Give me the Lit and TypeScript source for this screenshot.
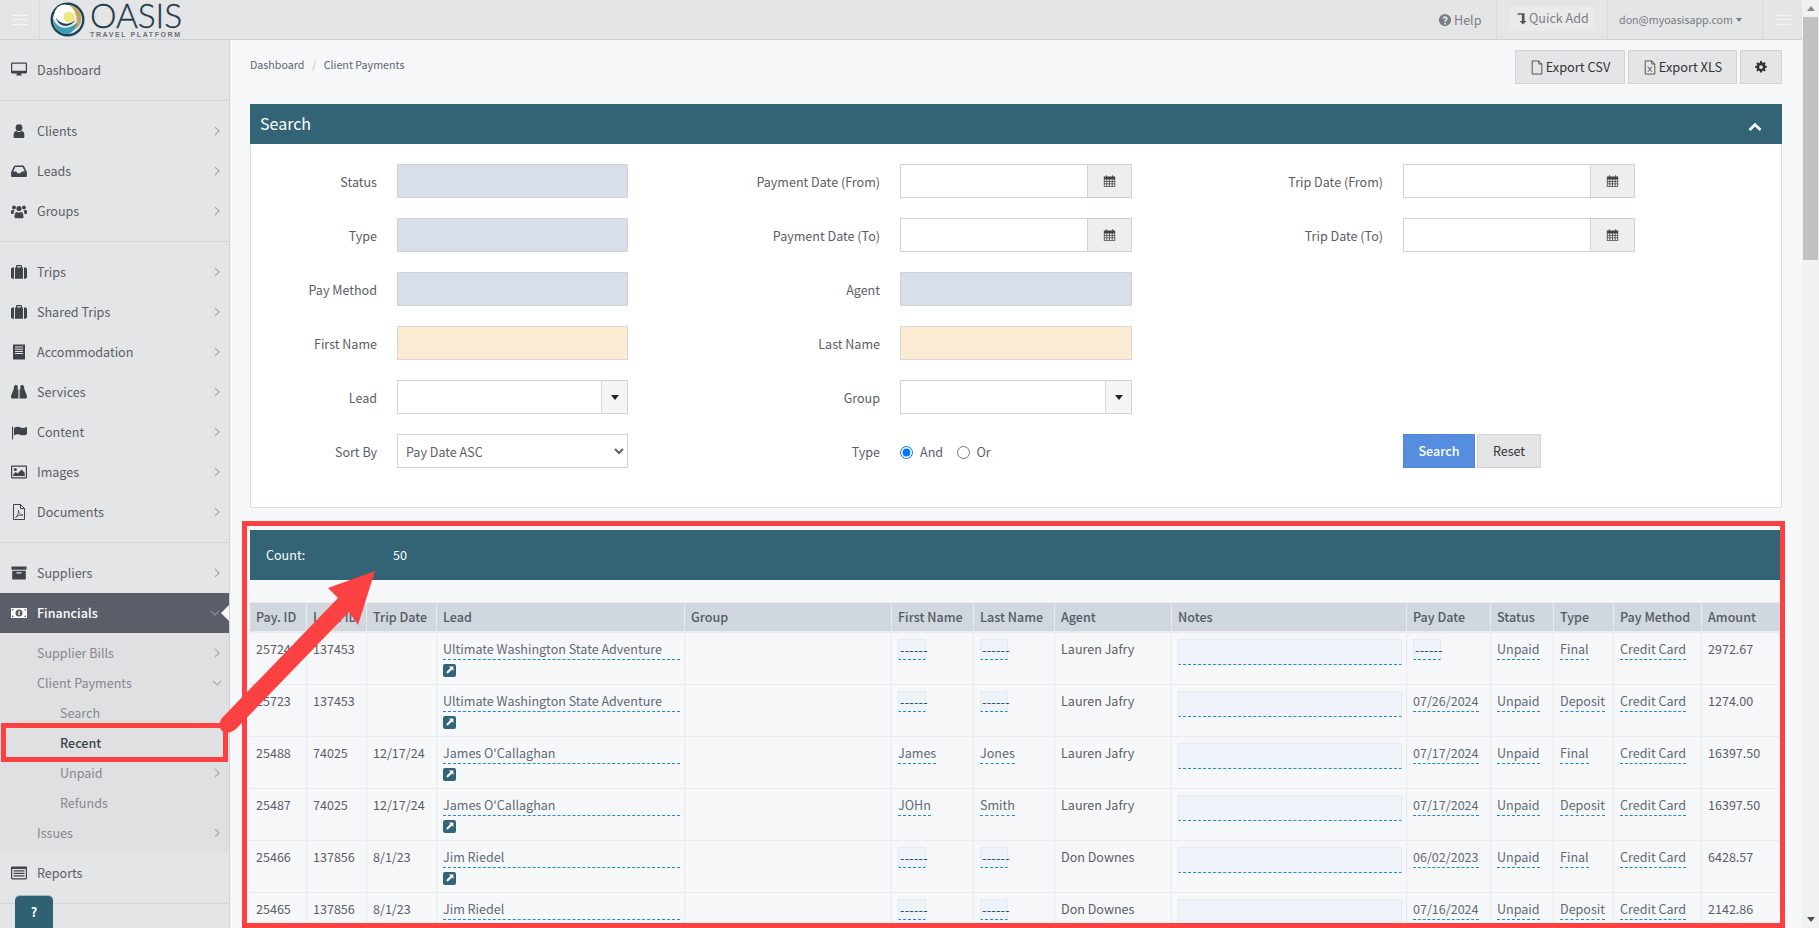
import { LitElement, html, css, svg } from "lit";
import { customElement } from "lit/decorators.js";

const P: Record<string, any> = {
  desktop: svg`<path fill-rule="evenodd" d="M0 1.7C0 1 .5.6 1.1.6h13.8c.6 0 1.1.4 1.1 1.1v8.6c0 .7-.5 1.1-1.1 1.1H10c0 .9.5 1.2.8 1.7v.5H5.200v-.5c.3-.5.8-.8.8-1.700H1.100C.5 11.400 0 11 0 10.300zM1.200 1.800v7h13.600v-7z"/>`,
  user: svg`<circle cx="8" cy="4.700" r="3.400"/><path d="M2.500 13.200c0-3.500 1.200-5.200 3-5.200 1.600 1.200 3.400 1.200 5 0 1.800 0 3 1.700 3 5.200 0 1.200-.8 1.900-1.800 1.900H4.300C3.300 15.100 2.500 14.400 2.500 13.200z"/>`,
  inbox: svg`<path fill-rule="evenodd" d="M4 2.500h8c.5 0 .8.200 1 .6l2.600 5.400c.2.300.3.600.3 1v3.400c0 .7-.5 1.100-1.100 1.100H1.200c-.6 0-1.100-.4-1.100-1.100V9.500c0-.4.100-.7.300-1L3 3.100c.2-.4.500-.6 1-.6zM4.300 4 2.200 8.500h3.200l1 1.800h3.200l1-1.800h3.200L11.700 4z"/>`,
  users: svg`<circle cx="8" cy="5.500" r="2.600"/><circle cx="3" cy="4.500" r="1.900"/><circle cx="13" cy="4.500" r="1.900"/><path d="M3.500 14c0-3 .8-5 2.300-5 1.300.8 3.100.8 4.400 0 1.500 0 2.300 2 2.300 5 0 .8-.6 1.300-1.300 1.300H4.800c-.7 0-1.300-.5-1.300-1.300z"/><path d="M0 10c0-2 .5-3.200 1.500-3.200.7.500 1.500.6 2.200.5-.6.700-1 1.400-1.200 3.700H1C.4 11 0 10.700 0 10zM16 10c0-2-.5-3.200-1.500-3.200-.7.500-1.500.6-2.200.5.600.700 1 1.400 1.200 3.700H15c.6 0 1-.3 1-1z"/>`,
  briefcase: svg`<path fill-rule="evenodd" d="M5 3.500V2.200C5 1.500 5.500 1 6.200 1h3.600c.7 0 1.200.5 1.200 1.200v1.300h1v11.200H4V3.500zM6.100 3.500h3.800V2.200H6.100z"/><path d="M1.700 3.500H3v11.200H1.700C.8 14.700 0 14 0 13V5.200c0-1 .8-1.700 1.700-1.700zM14.300 3.500H13v11.200h1.300c.9 0 1.700-.7 1.700-1.700V5.200c0-1-.8-1.700-1.700-1.700z"/>`,
  building: svg`<path fill-rule="evenodd" d="M2 .5h12v15H2zM4 2.500v1h8v-1zM4 4.700v1h8v-1zM4 6.900v1h8v-1zM4 9.100v1h8v-1z"/>`,
  binoculars: svg`<path d="M4.700 1c1.200 0 2 .5 2 1.500v3h.7v9H1C.4 14.500 0 14 0 13.300 0 10 2 8 2.700 5c0-2.500.8-4 2-4zM11.300 1c-1.200 0-2 .5-2 1.500v3h-.7v9H15c.6 0 1-.5 1-1.200C16 10 14 8 13.300 5c0-2.500-.8-4-2-4z"/>`,
  flag: svg`<path d="M1 2.500h1.100v13H1z"/><path d="M3 4c2.500-1.500 4.500-1.500 6.500-.5 2 .8 4 .6 6.500-.7v7.400c-2.500 1.300-4.500 1.500-6.500.7-2-1-4-1-6.500.5z"/>`,
  image: svg`<path fill-rule="evenodd" d="M0 2.800c0-.7.500-1.200 1.200-1.200h13.600c.7 0 1.200.5 1.200 1.200v10.400c0 .7-.5 1.200-1.200 1.200H1.200C.5 14.400 0 13.900 0 13.200zM1.200 2.800v10.400h13.600V2.800z"/><circle cx="4.300" cy="5.500" r="1.500"/><path d="M2.300 12v-1.700l2.500-2.400 1.800 1.500 3.900-4 3.200 3.300V12z"/>`,
  pdf: svg`<path fill="none" stroke="currentColor" d="M2.500.5h7l4 4v11h-11zM9.500.5v4h4"/><path fill="none" stroke="currentColor" stroke-width=".8" d="M4.500 13.500c2-1 3.500-5 3-7.500-.5 2.500 2 5 4.500 5-2.500-.2-5.500.6-7.500 2.500z"/>`,
  archive: svg`<path fill-rule="evenodd" d="M.5 1.500h15v3.300H.5zM1.200 5.800h13.600v8.700H1.200zM5.500 7.300v1.300h5V7.300z"/>`,
  money: svg`<path fill="#fff" d="M0 3h16v10H0z"/><circle cx="8" cy="8" r="3.500" fill="#5a5e69"/><path fill="#fff" d="M7.500 6h1.200v4H7.500z"/><path fill="#5a5e69" d="M1 4h2L1 6zM15 4h-2l2 2zM1 12h2l-2-2zM15 12h-2l2-2z"/>`,
  list: svg`<path fill-rule="evenodd" d="M0 2.800c0-.7.500-1.200 1.200-1.200h13.600c.7 0 1.200.5 1.200 1.200v10.400c0 .7-.5 1.200-1.200 1.200H1.200C.5 14.400 0 13.900 0 13.200zM1.200 4v9.200h13.600V4zM2.500 5.200h11v1.300h-11zM2.500 7.800h11v1.300h-11zM2.500 10.300h11v1.300h-11z"/>`,
  calendar: svg`<path fill-rule="evenodd" d="M1 2.500h2.500V1h1.200v1.500h6.600V1h1.200v1.500H15v12.500H1zM2 6v2h2.200V6zM5.200 6v2h2.300V6zM8.500 6v2h2.300V6zM11.800 6v2H14V6zM2 9v2h2.200V9zM5.200 9v2h2.300V9zM8.500 9v2h2.300V9zM11.800 9v2H14V9zM2 12v2h2.200v-2zM5.200 12v2h2.300v-2zM8.500 12v2h2.300v-2zM11.800 12v2H14v-2z"/>`,
  file: svg`<path fill="none" stroke="currentColor" d="M2.500.5h7.500l3.500 3.500v11.500h-11zM10 .5V4h3.500"/>`,
  xls: svg`<path fill="none" stroke="currentColor" d="M2.500.5h7.500l3.500 3.500v11.500h-11zM10 .5V4h3.500"/><path fill="none" stroke="currentColor" d="M5.500 7l4.500 6M10 7l-4.500 6"/>`,
  gear: svg`<path fill-rule="evenodd" d="M6.800 0h2.400l.4 2.100 1.200.5 1.800-1.200 1.700 1.700-1.200 1.800.5 1.200 2.100.4v2.400l-2.100.4-.5 1.200 1.200 1.800-1.700 1.700-1.800-1.200-1.200.5-.4 2.100H6.800l-.4-2.100-1.200-.5-1.800 1.200-1.700-1.700 1.200-1.800-.5-1.200L.3 9.200V6.800l2.100-.4.5-1.200-1.200-1.800 1.700-1.700 1.800 1.200 1.200-.5zM8 5.500a2.500 2.500 0 1 0 0 5 2.500 2.500 0 0 0 0-5z"/>`,
  help: svg`<path fill-rule="evenodd" d="M8 1a7 7 0 1 1 0 14A7 7 0 0 1 8 1zM5.300 5.900l1.500.8c.2-.6.600-1 1.200-1 .6 0 1 .3 1 .8 0 .9-1.800 1.200-1.800 2.900v.5h2v-.4c0-.9 1.900-1.300 1.900-3.100C11.100 4.700 9.600 3.800 8 3.800c-1.300 0-2.200.7-2.700 2.100zM7.200 11v2h2v-2z"/>`,
  level: svg`<path d="M2 1.500h8.500v9.500H13L8.700 15.500 4.400 11h2.800V3.500H2z"/>`,
  ext: svg`<path fill="#fff" d="M6.500 2.800h4.700v4.700L9.600 6 5 10.600 3.400 9 8 4.400z"/>`,
};
const icon = (n: string, cls = "ic") => html`<svg class=${cls} viewBox="0 0 16 16" fill="currentColor" aria-hidden="true">${P[n]}</svg>`;
const chev = (down = false) => html`<svg class="chev" viewBox="0 0 10 10" aria-hidden="true"><path fill="none" stroke="currentColor" stroke-width="1.100" d=${down ? "M1 3l4 4 4-4" : "M3 1l4 4-4 4"}/></svg>`;

const sections = [
  [["Dashboard", "desktop", 0]],
  [["Clients", "user", 1], ["Leads", "inbox", 1], ["Groups", "users", 1]],
  [["Trips", "briefcase", 1], ["Shared Trips", "briefcase", 1], ["Accommodation", "building", 1], ["Services", "binoculars", 1], ["Content", "flag", 1], ["Images", "image", 1], ["Documents", "pdf", 1]],
];

const cols = [57, 60, 70, 248, 207, 82, 81, 117, 235, 84, 63, 60, 88, 80];
const heads = ["Pay. ID", "Lead ID", "Trip Date", "Lead", "Group", "First Name", "Last Name", "Agent", "Notes", "Pay Date", "Status", "Type", "Pay Method", "Amount"];
const UW = "Ultimate Washington State Adventure";
const rows = [
  ["25724", "137453", "", UW, "------", "------", "Lauren Jafry", "------", "Final", "2972.67"],
  ["25723", "137453", "", UW, "------", "------", "Lauren Jafry", "07/26/2024", "Deposit", "1274.00"],
  ["25488", "74025", "12/17/24", "James O'Callaghan", "James", "Jones", "Lauren Jafry", "07/17/2024", "Final", "16397.50"],
  ["25487", "74025", "12/17/24", "James O'Callaghan", "JOHn", "Smith", "Lauren Jafry", "07/17/2024", "Deposit", "16397.50"],
  ["25466", "137856", "8/1/23", "Jim Riedel", "------", "------", "Don Downes", "06/02/2023", "Final", "6428.57"],
  ["25465", "137856", "8/1/23", "Jim Riedel", "------", "------", "Don Downes", "07/16/2024", "Deposit", "2142.86"],
];

@customElement("app-root")
export class AppRoot extends LitElement {
  static styles = css`
    :host { display: flex; width: 1819px; height: 928px; overflow: hidden; position: relative;
      font: 12.550px/20px "Noto Sans CJK SC", "Noto Sans", sans-serif; color: #5a5e66; background: #f6f7f9; }
    * { box-sizing: border-box; }
    svg { display: block; flex: none; }
    .page { width: 1802px; height: 928px; display: flex; flex-direction: column; overflow: hidden; }
    .bar { width: 17px; background: #f1f1f1; display: flex; flex-direction: column; align-items: center; }
    .bar i { height: 17px; width: 17px; display: flex; align-items: center; justify-content: center; }
    .bar i::after { content: ""; border: 4px solid transparent; }
    .bar i.up::after { border-bottom: 5px solid #8a8a8a; border-top: 0; }
    .bar i.dn::after { border-top: 5px solid #505050; border-bottom: 0; }
    .bar .thumb { width: 15px; height: 243px; background: #c1c1c1; }
    .bar .rest { flex: 1; }

    .top { height: 40px; flex: none; background: #e4e5e7; border-bottom: 1px solid #cfd1d4; display: flex; align-items: stretch; }
    .burger { width: 40px; display: flex; flex-direction: column; align-items: center; justify-content: center; gap: 3.500px; border-right: 1px solid #d6d8da; }
    .burger b { width: 16px; height: 1px; background: #f6f6f6; }
    .logo { display: flex; margin-left: 10px; gap: 5px; padding-top: 2px; }
    .logo svg { width: 35px; height: 35px; }
    .brand { color: #1e3848; display: flex; flex-direction: column; margin-top: -2px; }
    .brand b { font: 300 33.500px/30px "Lato", sans-serif; letter-spacing: -.1px; height: 30px; -webkit-text-stroke: .3px #1e3848; }
    .brand span { font: 700 7px/9px "Liberation Sans", sans-serif; letter-spacing: 1.600px; color: #6a7076; white-space: nowrap; }
    .grow { flex: 1; }
    .t-help { display: flex; align-items: center; gap: 2px; width: 58px; color: #7b7e82; white-space: nowrap; }
    .t-help svg { width: 14px; height: 14px; }
    .t-quick { width: 111px; border-left: 1px solid #d6d8da; display: flex; align-items: center; padding-left: 12px; }
    .t-quick div { width: 86px; height: 25px; background: #e9ebea; display: flex; align-items: center; gap: 0; padding-left: 7px; color: #7b7e82; margin-top: -3px; white-space: nowrap; }
    .t-quick svg { width: 13px; height: 15px; color: #555; }
    .t-user { width: 155px; border-left: 1px solid #d6d8da; display: flex; align-items: center; padding-left: 11px; font-size: 10.700px; color: #777a7f; gap: 3px; white-space: nowrap; }
    .caret { width: 0; height: 0; border: 3.500px solid transparent; border-top: 4px solid #777a7f; border-bottom: 0; }
    .t-burger { border-left: 1px solid #d6d8da; border-right: 0; }

    .body { flex: 1; display: flex; min-height: 0; }
    .side { width: 230px; flex: none; background: #e4e5e7; border-right: 1px solid #cfd1d4; }
    .sec { padding: 10px 0; border-bottom: 1px solid #d3d5d8; }
    .it { height: 40px; display: flex; align-items: center; padding-left: 11px; gap: 10px; position: relative; color: #5a5e66; }
    .it .ic { width: 16px; height: 16px; color: #3f434c; }
    .it .chev, .s1 .chev { position: absolute; right: 7px; top: 15px; width: 10px; height: 10px; color: #a6a8ac; }
    .it.on { background: #5a5e69; color: #fff; font-weight: 500; }
    .it.on .ic { color: #fff; }
    .it.on .chev { color: #8d9097; right: 9px; }
    .it.on::after { content: ""; position: absolute; right: 0; top: 12px; border: 8px solid transparent; border-right: 8px solid #f6f7f9; border-left: 0; }
    .sub { background: #dfe0e2; padding: 5px 0; }
    .s1 { height: 30px; display: flex; align-items: center; padding-left: 37px; color: #85888e; position: relative; }
    .s1 .chev { top: 10px; }
    .s1.deep { padding-left: 60px; }
    .s1.cur { color: #40444c; font-weight: 500; }

    .main { flex: 1; padding: 10px 20px 0; min-width: 0; background: #f6f7f9; }
    .row1 { height: 34px; display: flex; align-items: center; gap: 3px; margin-bottom: 20px; }
    .crumb { flex: 1; font-size: 10.700px; color: #5d6470; display: flex; gap: 7.500px; padding-bottom: 4px; }
    .crumb i { font-style: normal; color: #bbb; }
    .btn { height: 34px; width: 110px; background: #e4e5e7; border: 1px solid #d0d2d5; color: #333; display: flex; align-items: center; justify-content: center; gap: 2px; font-size: 12.800px; }
    .btn.x { width: 109px; }
    .btn svg { width: 14px; height: 15px; color: #444; }
    .btn.gear { width: 42px; }
    .btn.gear svg { width: 12px; height: 12px; color: #333; }

    .phead { height: 40px; background: #336476; color: #fff; font-size: 16px; padding: 0 0 2px 10px; display: flex; align-items: center; justify-content: space-between; }
    .phead svg { width: 14px; height: 10px; margin: 7px 20px 0 0; }
    .pbody { height: 364px; background: #fff; border: 1px solid #dcdee1; border-top: 0; padding-top: 20px; display: grid; grid-template-columns: repeat(3, 503px); grid-auto-rows: 34px; row-gap: 20px; margin-bottom: 22px; }
    .f { display: flex; gap: 20px; margin-left: -1px; }
    .f label { width: 127px; text-align: right; line-height: 36px; white-space: nowrap; }
    .ctl { width: 232px; height: 34px; border: 1px solid #d0d2d5; background: #fff; display: flex; justify-content: flex-end; }
    .f:nth-child(3n+1) .ctl { width: 231px; }
    .ctl.grey { background: #d8dfe8; border-color: #ced3da; }
    .ctl.tan { background: #fbebd3; border-color: #d9d6cf; }
    .add { width: 44px; background: #eceef0; border-left: 1px solid #d0d2d5; display: flex; align-items: center; justify-content: center; color: #444; }
    .add svg { width: 13px; height: 14px; margin-top: -1px; }
    .sel { width: 26px; background: #f4f5f6; border-left: 1px solid #d8dadc; display: flex; align-items: center; justify-content: center; }
    .sel i { border: 4px solid transparent; border-top: 5px solid #222; border-bottom: 0; }
    select { width: 231px; height: 34px; border: 1px solid #d0d2d5; background: #fff; font: inherit; color: #5a5e66; padding-left: 4px; border-radius: 0; outline: 0; }
    .radios { display: flex; align-items: center; height: 36px; color: #5a5e66; }
    .radios input { margin: 0 7px 0 0; width: 13px; height: 13px; }
    .radios span { width: 36.500px; }
    .acts { display: flex; gap: 2px; }
    .go { width: 72px; height: 34px; background: #568ddf; border: 1px solid #4f86d8; color: #fff; font-weight: 500; display: flex; align-items: center; justify-content: center; }
    .reset { width: 64px; height: 34px; background: #e4e5e7; border: 1px solid #d0d2d5; color: #333; display: flex; align-items: center; justify-content: center; }

    .count { height: 50px; background: #336476; color: #fff; display: flex; align-items: center; padding-left: 16px; margin-bottom: 22px; }
    .count span { width: 127px; }
    table { border-collapse: separate; border-spacing: 0; table-layout: fixed; width: 1532px; }
    th { height: 31px; background: #d0d7de; color: #555b63; font-weight: 500; text-align: left; padding: 0 6px; border-right: 1px solid #e8eaed; border-bottom: 2px solid #e8eaed; border-top: 1px solid #e8eaed; white-space: nowrap; }
    td { height: 52px; padding: 6px; vertical-align: top; border-right: 1px solid #e8eaed; border-bottom: 1px solid #e8eaed; color: #5a5e66; white-space: nowrap; }
    .ed { display: inline-block; border-bottom: 1px dashed #1f8ad6; color: #5e6a78; height: 21px; }
    .ed.block { display: block; margin-right: -2px; }
    .ed.empty { background: #edf3f9; border: 1px solid #e2ebf2; border-bottom: 1px dashed #1f8ad6; color: #27496b; width: 28px; padding-left: 1px; line-height: 20px; letter-spacing: .3px; }
    .note { display: block; height: 26px; margin-right: -2px; background: #edf3f9; border: 1px solid #e2ebf2; border-bottom: 1px dashed #1f8ad6; }
    .ext { width: 13px; height: 13px; background: #336476; border-radius: 2px; margin-top: 4px; }
    .q { position: absolute; left: 15px; top: 895px; width: 38px; height: 33px; background: #2f6172; border-top: 1px solid #a9b8bf; border-radius: 5px 5px 0 0; color: #fff; font-weight: 700; display: flex; align-items: center; justify-content: center; }
    .anno { position: absolute; inset: 0; width: 1819px; height: 928px; pointer-events: none; }
  `;

  side(s: any[][]) {
    return html`<div class="sec">${s.map((i) => html`<div class="it">${icon(i[1])}<span>${i[0]}</span>${i[2] ? chev() : ""}</div>`)}</div>`;
  }

  field(label: string, ctl: any) {
    return html`<div class="f"><label>${label}</label>${ctl}</div>`;
  }

  render() {
    const grey = html`<div class="ctl grey"></div>`;
    const tan = html`<div class="ctl tan"></div>`;
    const date = html`<div class="ctl"><div class="add">${icon("calendar")}</div></div>`;
    const s2 = html`<div class="ctl"><div class="sel"><i></i></div></div>`;
    const ed = (v: string) => v === "------" ? html`<span class="ed empty">${v}</span>` : html`<span class="ed">${v}</span>`;
    return html`
      <div class="page">
        <header class="top">
          <div class="burger"><b></b><b></b><b></b></div>
          <div class="logo">
            <svg viewBox="0 0 36 36" aria-hidden="true">
              <circle cx="18" cy="18" r="17.500" fill="#1d4456"/>
              <circle cx="18" cy="18" r="15" fill="#e8e8e8"/>
              <path d="M20 3.500C30 5 33 13 32 19c-1 6-5 9-9 10 4-4 5-8 4.500-12C27 11 24 6 20 3.500z" fill="#c7a25c"/>
              <circle cx="15" cy="13" r="10.500" fill="#fff"/>
              <circle cx="19.500" cy="15.500" r="5.800" fill="#efe680"/>
              <path d="M3 17c3 8 10 11 16 9 4-1 7-3 9-5-1 6-6 12-11 12C10 33 3 26 3 17z" fill="#3a9db3"/>
              <path d="M6 16c3 5 8 7 13 6 3 0 5-2 7-3-3 4-7 6-11 5.500C10 24 7 20 6 16z" fill="#1d4456"/>
            </svg>
            <div class="brand"><b>OASIS</b><span>TRAVEL PLATFORM</span></div>
          </div>
          <div class="grow"></div>
          <div class="t-help">${icon("help")}<span>Help</span></div>
          <div class="t-quick"><div>${icon("level")}<span>Quick Add</span></div></div>
          <div class="t-user"><span>don@myoasisapp.com</span><i class="caret"></i></div>
          <div class="burger t-burger"><b></b><b></b><b></b></div>
        </header>
        <div class="body">
          <aside class="side">
            ${sections.map((s) => this.side(s))}
            <div class="sec">
              <div class="it">${icon("archive")}<span>Suppliers</span>${chev()}</div>
              <div class="it on">${icon("money")}<span>Financials</span>${chev(true)}</div>
              <div class="sub">
                <div class="s1"><span>Supplier Bills</span>${chev()}</div>
                <div class="s1"><span>Client Payments</span>${chev(true)}</div>
                <div class="s1 deep"><span>Search</span></div>
                <div class="s1 deep cur"><span>Recent</span></div>
                <div class="s1 deep"><span>Unpaid</span>${chev()}</div>
                <div class="s1 deep"><span>Refunds</span></div>
                <div class="s1"><span>Issues</span>${chev()}</div>
              </div>
              <div class="it">${icon("list")}<span>Reports</span></div>
            </div>
          </aside>
          <main class="main">
            <div class="row1">
              <div class="crumb"><span>Dashboard</span><i>/</i><span>Client Payments</span></div>
              <div class="btn">${icon("file")}<span>Export CSV</span></div>
              <div class="btn x">${icon("xls")}<span>Export XLS</span></div>
              <div class="btn gear">${icon("gear")}</div>
            </div>
            <div class="phead"><span>Search</span><svg viewBox="0 0 14 10" aria-hidden="true"><path fill="none" stroke="#fff" stroke-width="2.600" d="M1.500 8L7 2.500 12.500 8"/></svg></div>
            <div class="pbody">
              ${this.field("Status", grey)}${this.field("Payment Date (From)", date)}${this.field("Trip Date (From)", date)}
              ${this.field("Type", grey)}${this.field("Payment Date (To)", date)}${this.field("Trip Date (To)", date)}
              ${this.field("Pay Method", grey)}${this.field("Agent", grey)}<div></div>
              ${this.field("First Name", tan)}${this.field("Last Name", tan)}<div></div>
              ${this.field("Lead", s2)}${this.field("Group", s2)}<div></div>
              ${this.field("Sort By", html`<select><option>Pay Date ASC</option></select>`)}
              ${this.field("Type", html`<div class="radios"><input type="radio" name="t" checked /><span>And</span><input type="radio" name="t" /><span>Or</span></div>`)}
              <div class="f"><label></label><div class="acts"><div class="go">Search</div><div class="reset">Reset</div></div></div>
            </div>
            <div class="count"><span>Count:</span><span>50</span></div>
            <table>
              <colgroup>${cols.map((w) => html`<col style="width:${w}px" />`)}</colgroup>
              <thead><tr>${heads.map((h) => html`<th>${h}</th>`)}</tr></thead>
              <tbody>
                ${rows.map((r) => html`<tr>
                  <td>${r[0]}</td><td>${r[1]}</td><td>${r[2]}</td>
                  <td><span class="ed block">${r[3]}</span><div class="ext"><svg viewBox="0 0 14 14" aria-hidden="true">${P.ext}</svg></div></td>
                  <td></td>
                  <td>${ed(r[4])}</td><td>${ed(r[5])}</td><td>${r[6]}</td>
                  <td><span class="note"></span></td>
                  <td>${ed(r[7])}</td><td>${ed("Unpaid")}</td><td>${ed(r[8])}</td><td>${ed("Credit Card")}</td><td>${r[9]}</td>
                </tr>`)}
              </tbody>
            </table>
          </main>
        </div>
      </div>
      <div class="bar"><i class="up"></i><div class="thumb"></div><div class="rest"></div><i class="dn"></i></div>
      <div class="q">?</div>
      <svg class="anno" viewBox="0 0 1819 928" aria-hidden="true">
        <rect x="3.500" y="725.500" width="222" height="34" fill="none" stroke="#fb4141" stroke-width="5"/>
        <rect x="244.500" y="523.500" width="1538" height="402" fill="none" stroke="#fb4141" stroke-width="5"/>
        <path d="M222 718L338 598 328 588 375 571 358 625 349 612 236 729C230 734 222 734 220 728 219 724 220 721 222 718Z" fill="#fb4141"/>
      </svg>
    `;
  }
}
